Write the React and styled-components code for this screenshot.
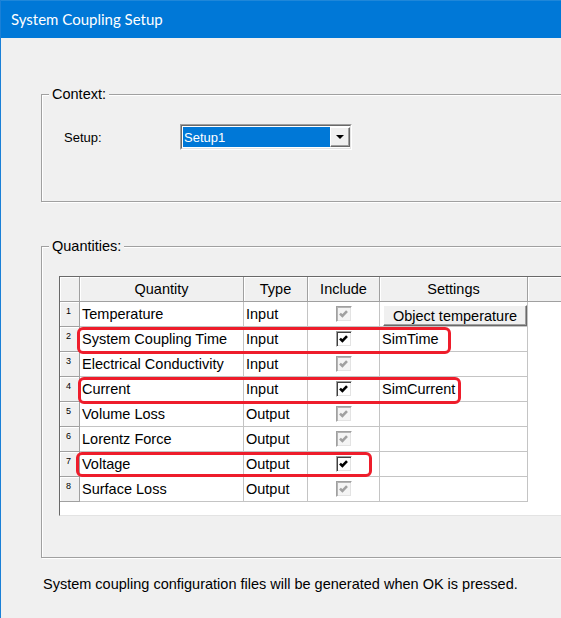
import styled, { createGlobalStyle } from "styled-components";

const UI_FONT = `"Liberation Sans", Arial, sans-serif`;

const GlobalStyle = createGlobalStyle`
  html, body {
    margin: 0;
    padding: 0;
    background: #f0f0f0;
  }
  body {
    overflow: hidden;
  }
`;

const rows = [
  { n: 1, name: "Temperature", type: "Input", checked: true, disabled: true, button: "Object temperature" },
  { n: 2, name: "System Coupling Time", type: "Input", checked: true, setting: "SimTime" },
  { n: 3, name: "Electrical Conductivity", type: "Input", checked: true, disabled: true },
  { n: 4, name: "Current", type: "Input", checked: true, setting: "SimCurrent" },
  { n: 5, name: "Volume Loss", type: "Output", checked: true, disabled: true },
  { n: 6, name: "Lorentz Force", type: "Output", checked: true, disabled: true },
  { n: 7, name: "Voltage", type: "Output", checked: true },
  { n: 8, name: "Surface Loss", type: "Output", checked: true, disabled: true },
];

// red annotation boxes drawn over the grid
const marks = [
  { x: 17, y: 50, w: 374, h: 27 },
  { x: 18, y: 100, w: 383, h: 27 },
  { x: 16, y: 175, w: 296, h: 25 },
];

const App = () => {
  return (
    <>
      <GlobalStyle />
      <Window>
        <TitleBar>System Coupling Setup</TitleBar>
        <Content>
          <GroupBox $top={48}>
            <Legend>Context:</Legend>
            <ContextBody>
              <FieldLabel>Setup:</FieldLabel>
              <ComboFrame>
                <ComboInner>
                  <ComboValue>Setup1</ComboValue>
                  <DropButton>
                    <Arrow />
                  </DropButton>
                </ComboInner>
              </ComboFrame>
            </ContextBody>
          </GroupBox>

          <GroupBox $top={36}>
            <Legend>Quantities:</Legend>
            <QuantitiesBody>
              <Grid>
                <HeaderCell />
                <HeaderCell>Quantity</HeaderCell>
                <HeaderCell>Type</HeaderCell>
                <HeaderCell>Include</HeaderCell>
                <HeaderCell>Settings</HeaderCell>
                <HeaderCell />

                {rows.map((r) => (
                  <Row key={r.n} r={r} />
                ))}

                <BlankRow />

                {marks.map((m, i) => (
                  <Mark key={i} $x={m.x} $y={m.y} $w={m.w} $h={m.h} />
                ))}
              </Grid>
            </QuantitiesBody>
          </GroupBox>

          <Footer>System coupling configuration files will be generated when OK is pressed.</Footer>
        </Content>
      </Window>
    </>
  );
};

const Row = ({ r }) => (
  <>
    <RowHeader>{r.n}</RowHeader>
    <Cell>{r.name}</Cell>
    <Cell>{r.type}</Cell>
    <Cell $center>
      <CheckBox $disabled={r.disabled}>
        {r.checked && (
          <svg width="9" height="8" viewBox="0 0 9 8">
            <path d="M1 3.6 L3.4 6 L8 1.2" fill="none" stroke="currentColor" strokeWidth="2.6" />
          </svg>
        )}
      </CheckBox>
    </Cell>
    <Cell>
      {r.button ? <CellButton>{r.button}</CellButton> : r.setting}
    </Cell>
    <Filler />
  </>
);

export default App;

const Window = styled.div`
  width: 561px;
  height: 618px;
  box-sizing: border-box;
  border-left: 1px solid #1a80d7;
  background: #f0f0f0;
  overflow: hidden;
  display: flex;
  flex-direction: column;
  font-family: ${UI_FONT};
  color: #000;
`;

const TitleBar = styled.div`
  flex: none;
  height: 38px;
  box-sizing: border-box;
  border-top: 1px solid #1f87d9;
  background: #0078d7;
  color: #fff;
  display: flex;
  align-items: center;
  padding: 0 0 1px 10px;
  font-family: Lato, "Open Sans", sans-serif;
  font-size: 15px;
`;

const Content = styled.div`
  display: flex;
  flex-direction: column;
  padding-left: 40px;
`;

const GroupBox = styled.fieldset`
  flex: none;
  margin: ${(p) => p.$top}px 0 0;
  padding: 0;
  min-width: 0;
  width: 560px;
  box-sizing: border-box;
  border: 1px solid #a0a0a0;
  box-shadow: inset 1px 1px 0 #fff, 1px 1px 0 #fff;
`;

const Legend = styled.legend`
  margin-left: 7px;
  padding: 0 3px;
  background: #f0f0f0;
  font-size: 14.5px;
  line-height: 17px;
`;

const ContextBody = styled.div`
  display: flex;
  align-items: center;
  padding: 21px 0 51px 22px;
`;

const FieldLabel = styled.span`
  width: 116px;
  font-size: 13px;
`;

const ComboFrame = styled.div`
  width: 172px;
  height: 26px;
  box-sizing: border-box;
  border: 1px solid;
  border-color: #a0a0a0 #fff #fff #a0a0a0;
`;

const ComboInner = styled.div`
  height: 100%;
  box-sizing: border-box;
  border: 1px solid;
  border-color: #696969 #e3e3e3 #e3e3e3 #696969;
  background: #fff;
  padding: 1px 0 1px 1px;
  display: flex;
`;

const ComboValue = styled.div`
  flex: 1;
  background: #0078d7;
  color: #fff;
  font-size: 13px;
  display: flex;
  align-items: center;
  padding-left: 1px;
`;

const DropButton = styled.div`
  width: 20px;
  box-sizing: border-box;
  background: #f0f0f0;
  border: 1px solid;
  border-color: #fff #696969 #696969 #fff;
  box-shadow: inset -1px -1px 0 #a0a0a0;
  display: flex;
  align-items: center;
  justify-content: center;
`;

const Arrow = styled.span`
  width: 0;
  height: 0;
  border-left: 4px solid transparent;
  border-right: 4px solid transparent;
  border-top: 4px solid #000;
`;

const QuantitiesBody = styled.div`
  padding: 21px 0 41px 17px;
`;

const Grid = styled.div`
  position: relative;
  width: 520px;
  box-sizing: border-box;
  display: grid;
  grid-template-columns: 20px 164px 64px 72px 148px 1fr;
  grid-template-rows: repeat(9, 25px) 13px;
  background: #fff;
  border-top: 1px solid #696969;
  border-left: 1px solid #696969;
  border-bottom: 1px solid #e3e3e3;
  font-size: 14.5px;
`;

const HeaderCell = styled.div`
  box-sizing: border-box;
  background: #f0f0f0;
  border-right: 1px solid #a0a0a0;
  border-bottom: 1px solid #a0a0a0;
  box-shadow: inset 1px 1px 0 #fff;
  display: flex;
  align-items: center;
  justify-content: center;
  white-space: nowrap;
`;

const RowHeader = styled.div`
  box-sizing: border-box;
  background: #f0f0f0;
  border-right: 1px solid #a0a0a0;
  border-bottom: 1px solid #a0a0a0;
  box-shadow: inset 1px 1px 0 #fff;
  font-size: 9px;
  line-height: 10px;
  padding: 4px 0 0 6px;
`;

const Cell = styled.div`
  box-sizing: border-box;
  border-right: 1px solid #c4c4c4;
  border-bottom: 1px solid #c4c4c4;
  display: flex;
  align-items: ${(p) => (p.$center ? "center" : "stretch")};
  justify-content: ${(p) => (p.$center ? "center" : "flex-start")};
  padding-left: ${(p) => (p.$center ? 0 : 2)}px;
  line-height: 25px;
  white-space: nowrap;
  overflow: hidden;
`;

const Filler = styled.div``;

const BlankRow = styled.div`
  grid-column: 1 / -1;
`;

const CheckBox = styled.span`
  width: 16px;
  height: 16px;
  box-sizing: border-box;
  border: 1px solid;
  border-color: #a0a0a0 #fff #fff #a0a0a0;
  box-shadow: inset 1px 1px 0 ${(p) => (p.$disabled ? "#b4b4b4" : "#404040")},
    inset -1px -1px 0 #e3e3e3;
  background: ${(p) => (p.$disabled ? "#f4f4f4" : "#fff")};
  color: ${(p) => (p.$disabled ? "#a0a0a0" : "#000")};
  display: flex;
  align-items: center;
  justify-content: center;
`;

const CellButton = styled.div`
  margin: 3px 0 0 1px;
  width: 144px;
  height: 21px;
  box-sizing: border-box;
  background: #f0f0f0;
  border: 1px solid;
  border-color: #fff #696969 #696969 #fff;
  box-shadow: inset -1px -1px 0 #a0a0a0;
  display: flex;
  align-items: center;
  justify-content: center;
  line-height: 18px;
`;

const Mark = styled.div`
  position: absolute;
  left: ${(p) => p.$x}px;
  top: ${(p) => p.$y}px;
  width: ${(p) => p.$w}px;
  height: ${(p) => p.$h}px;
  box-sizing: border-box;
  border: 3px solid #ee1d2b;
  border-radius: 6px;
  pointer-events: none;
`;

const Footer = styled.div`
  margin: 18px 0 0 2px;
  font-size: 14.5px;
  line-height: 17px;
  white-space: nowrap;
`;
